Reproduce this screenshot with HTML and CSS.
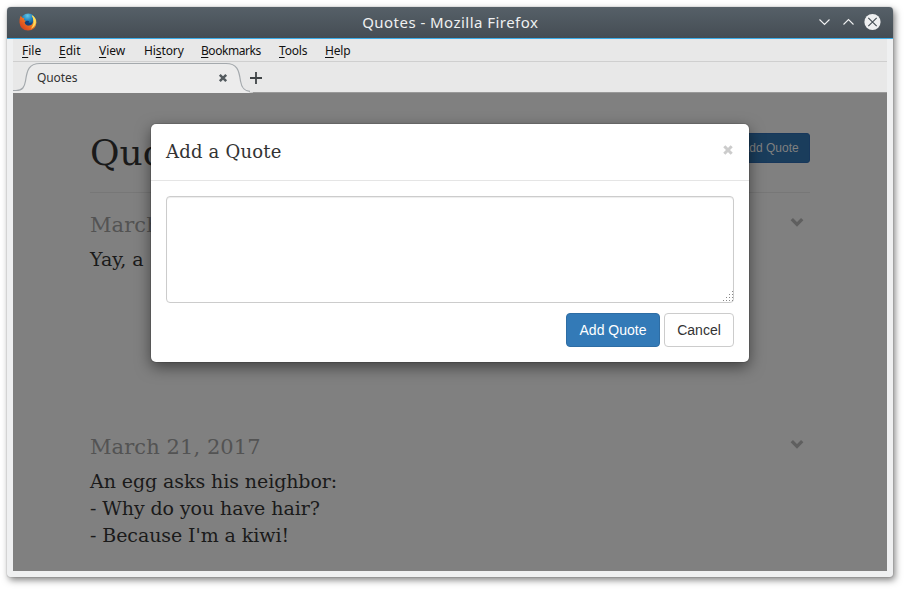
FILE: index.html
```html
<!DOCTYPE html>
<html lang="en">
<head>
<meta charset="utf-8">
<title>Quotes</title>
<link rel="stylesheet" href="styles.css">
</head>
<body>
<div class="window">
  <header class="titlebar">
    <svg class="firefox" viewBox="0 0 18 18">
      <defs>
        <radialGradient id="globe" cx=".45" cy=".15" r=".75"><stop offset="0" stop-color="#62c7e8"/><stop offset=".5" stop-color="#1976b4"/><stop offset="1" stop-color="#123569"/></radialGradient>
        <linearGradient id="fox" x1="0" y1="1" x2="1" y2="0"><stop offset="0" stop-color="#cf3020"/><stop offset=".5" stop-color="#ee7120"/><stop offset="1" stop-color="#ffe76a"/></linearGradient>
      </defs>
      <circle cx="9.3" cy="8.3" r="7.9" fill="url(#globe)"/>
      <path d="M1.600 2.800 3.300 4.800Q4.500 4.600 5.300 5.200L5 7 7 8.100 5.700 9.500Q6.500 12.800 10 12.600 13.500 12.300 14.200 8.500 14.600 4.600 12.500 2.200 17.500 4.500 17.400 9.500 16.800 17.200 9 17.600 1.300 17.300.5 9.500.3 5.800 1.600 2.800Z" fill="url(#fox)"/>
      <path d="M7 8.100 5.700 9.500Q6.500 12.300 9.500 12.300 12.800 12 13.200 9 11.500 10.800 9.500 9.600 10.500 9 9.800 8.100 8.500 7.500 7 8.100Z" fill="#163f78"/>
      <path d="M13 2Q17.500 5 16.600 10 15.500 14.300 12 15.700 15.500 11 14.500 6.500Z" fill="#ffdf59"/>
    </svg>
    <span class="title">Quotes - Mozilla Firefox</span>
    <svg class="controls" viewBox="0 0 64 18">
      <path d="M1.500 6.500 6.500 11.500 11.500 6.500M25.500 11.500 30.500 6.500 35.500 11.500" fill="none" stroke="#eff0f1" stroke-width="1.100"/>
      <circle cx="54.500" cy="9" r="8.100" fill="#eff0f1"/>
      <path d="M50.300 4.800 58.700 13.200M58.700 4.800 50.300 13.200" stroke="#475057" stroke-width="1.200"/>
    </svg>
  </header>
  <div class="client">
    <nav class="menubar">
      <span class="m-file"><u>F</u>ile</span><span class="m-edit"><u>E</u>dit</span><span class="m-view"><u>V</u>iew</span><span class="m-history">Hi<u>s</u>tory</span><span class="m-bookmarks"><u>B</u>ookmarks</span><span class="m-tools"><u>T</u>ools</span><span class="m-help"><u>H</u>elp</span>
    </nav>
    <div class="tabs">
      <div class="tab">
        <svg class="tab-shape" viewBox="0 0 240 31">
          <path d="M0 31V29.500H3C9.500 29.500 11.500 26 12.500 20 14 8 16 1.500 27 1.500H213C224 1.500 226 8 227.500 20 228.500 26 230.500 30.500 240 30.500V31Z" fill="#ececec"/>
          <path d="M0 28.500H3C9.500 28.500 11.500 25 12.500 19 14 8 16 1.500 27 1.500H213C224 1.500 226 8 227.500 19 228.500 25 230.500 29 237 29.300" fill="none" stroke="#a4a9ad" stroke-width="1.200"/>
          <path d="M206.800 12.800 213.200 19.200M213.200 12.800 206.800 19.200" stroke="#535a5e" stroke-width="2.500"/>
        </svg>
        <span class="tab-label">Quotes</span>
      </div>
      <svg class="plus" viewBox="0 0 12 12"><path d="M0 6H12M6 0V12" stroke="#3f4446" stroke-width="1.800"/></svg>
    </div>
    <main class="page">
      <div class="page-header"><h1>Quo</h1><button class="btn-small">Add Quote</button></div>
      <article>
        <div class="date-row"><h2>March</h2><svg class="chevron" viewBox="0 0 14 10"><path d="M1.800 2.200 7 7.400 12.200 2.200" fill="none" stroke="#5f5f5f" stroke-width="3.300"/></svg></div>
        <p>Yay, a</p>
      </article>
      <article>
        <div class="date-row"><h2>March 21, 2017</h2><svg class="chevron" viewBox="0 0 14 10"><path d="M1.800 2.200 7 7.400 12.200 2.200" fill="none" stroke="#5f5f5f" stroke-width="3.300"/></svg></div>
        <p>An egg asks his neighbor:<br>- Why do you have hair?<br>- Because I'm a kiwi!</p>
      </article>
      <section class="modal">
        <div class="modal-header"><h3>Add a Quote</h3><svg class="close" viewBox="0 0 10 10"><path d="M1.300 1.300 8.700 8.700M8.700 1.300 1.300 8.700" stroke="#ccc" stroke-width="3"/></svg></div>
        <div class="modal-body">
          <div class="textarea"><svg class="grip" viewBox="0 0 10 10"><path d="M9 0h1v1h-1zM6 3h1v1h-1zM9 3h1v1h-1zM3 6h1v1h-1zM6 6h1v1h-1zM9 6h1v1h-1zM0 9h1v1h-1zM3 9h1v1h-1zM6 9h1v1h-1zM9 9h1v1h-1z" fill="#888"/></svg></div>
          <div class="actions"><button class="primary">Add Quote</button><button class="cancel">Cancel</button></div>
        </div>
      </section>
    </main>
  </div>
</div>
</body>
</html>
```
FILE: styles.css
```css
* { box-sizing: border-box; }
body { margin: 0; padding: 7px; height: 590px; background: #fff; overflow: hidden; font-family: "DejaVu Serif", serif; }
svg { display: block; flex: none; }
h1, h2, h3, p { margin: 0; font-weight: 400; }
.window { width: 886px; height: 570px; background: #eff0f1; border-radius: 4px 4px 3px 3px; box-shadow: 0 0 1px 0 rgba(0,0,0,.5), 2px 3px 7px rgba(0,0,0,.5); }
.titlebar { display: flex; align-items: center; justify-content: space-between; height: 32px; padding: 0 11.5px 2px 12px; border-bottom: 1px solid #3daee9; border-radius: 4px 4px 0 0; background: linear-gradient(#566068, #454d54); }
.firefox { width: 18px; height: 18px; }
.title { margin-left: 46px; color: #eff0f1; font: 15px/20px "Noto Sans", sans-serif; letter-spacing: .46px; white-space: nowrap; }
.controls { width: 64px; height: 18px; }
.client { width: 874px; margin-left: 6px; background: #e8e8e8; }
.menubar { display: flex; gap: 18px; height: 23px; padding-left: 9px; border-bottom: 1px solid #cfcfcf; font: 12px/23px "Noto Sans", sans-serif; color: #111; }
.menubar span { white-space: nowrap; }
.menubar u { text-decoration-thickness: 1px; text-underline-offset: 2px; }
.m-file { width: 19px; }
.m-edit { width: 22px; }
.m-view { width: 27px; }
.m-history { width: 39px; letter-spacing: -.1px; }
.m-bookmarks { width: 60px; letter-spacing: -.45px; }
.m-tools { width: 28px; letter-spacing: -.2px; }
.m-help { width: 25px; letter-spacing: -.2px; }
.tabs { display: flex; height: 31px; border-bottom: 1px solid #999; }
.tab { display: grid; width: 237px; height: 31px; }
.tab-shape { grid-area: 1/1; width: 240px; height: 31px; }
.tab-label { grid-area: 1/1; z-index: 1; padding-left: 24px; font: 12px/31px "Noto Sans", sans-serif; letter-spacing: -.1px; color: #333; }
.plus { width: 12px; height: 12px; margin-top: 10px; }
.page { position: relative; height: 478px; padding: 40px 77px 0; background: #808080; color: #1a1a1a; overflow: hidden; }
.page-header { display: flex; justify-content: space-between; height: 60px; border-bottom: 1px solid #777; }
h1 { font-size: 36px; line-height: 40px; }
button { margin: 0; padding: 0; border-radius: 4px; font-family: "Liberation Sans", sans-serif; white-space: nowrap; }
.btn-small { width: 82px; height: 30px; padding-left: 2px; border: 1px solid #17375b; border-radius: 3px; background: #1a3d5c; color: #808080; font-size: 12px; }
article { height: 222px; padding-top: 20px; }
.date-row { display: flex; justify-content: space-between; padding-right: 6px; height: 33px; }
h2 { color: #535353; font-size: 21px; line-height: 25px; letter-spacing: .08px; }
.chevron { width: 14px; height: 10px; margin-top: 4px; }
p { font-size: 19px; line-height: 27px; letter-spacing: -.08px; white-space: nowrap; }
.modal { position: absolute; left: 138px; top: 31px; width: 598px; height: 238px; background: #fff; border-radius: 5px; box-shadow: 0 0 0 1px rgba(0,0,0,.1), 0 5px 15px rgba(0,0,0,.5); color: #333; }
.modal-header { display: flex; justify-content: space-between; height: 57px; padding: 15px 16px 0 15px; border-bottom: 1px solid #e5e5e5; }
h3 { font-size: 18px; line-height: 25px; letter-spacing: .2px; }
.close { width: 10px; height: 10px; margin-top: 6px; }
.modal-body { padding: 15px; }
.textarea { display: flex; align-items: flex-end; justify-content: flex-end; height: 107px; padding: 0 0 1px; border: 1px solid #ccc; border-radius: 4px; box-shadow: inset 0 1px 1px rgba(0,0,0,.075); }
.grip { width: 10px; height: 10px; }
.actions { display: flex; justify-content: flex-end; gap: 4px; margin-top: 10px; }
.actions button { height: 34px; font-size: 14px; }
.actions .primary { width: 94px; border: 1px solid #2e6da4; background: #337ab7; color: #fff; }
.actions .cancel { width: 70px; border: 1px solid #ccc; background: #fff; color: #333; }
```
